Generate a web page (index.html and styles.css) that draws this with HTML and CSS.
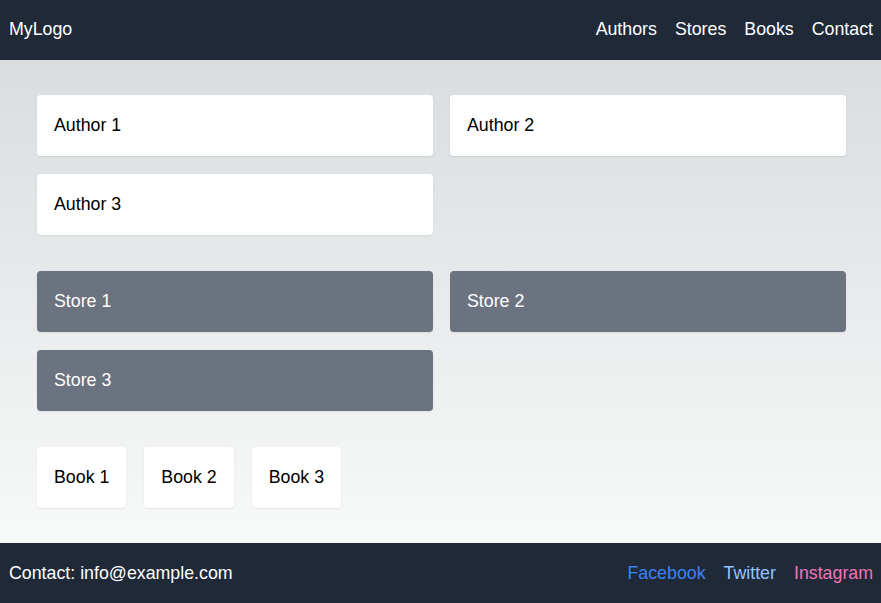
FILE: index.html
```html
<!DOCTYPE html>
<html lang="en">
<head>
<meta charset="utf-8">
<title>MyLogo</title>
<link rel="stylesheet" href="styles.css">
</head>
<body>
<header class="site-header">
  <div class="logo">MyLogo</div>
  <nav class="nav">
    <a href="#">Authors</a>
    <a href="#">Stores</a>
    <a href="#">Books</a>
    <a href="#">Contact</a>
  </nav>
</header>
<main class="main">
  <section class="grid2">
    <div class="card card-light">Author 1</div>
    <div class="card card-light">Author 2</div>
    <div class="card card-light">Author 3</div>
  </section>
  <section class="grid2">
    <div class="card card-dark">Store 1</div>
    <div class="card card-dark">Store 2</div>
    <div class="card card-dark">Store 3</div>
  </section>
  <section class="books">
    <div class="card card-light book">Book 1</div>
    <div class="card card-light book">Book 2</div>
    <div class="card card-light book">Book 3</div>
  </section>
</main>
<footer class="site-footer">
  <div class="contact">Contact: info@example.com</div>
  <div class="social">
    <a href="#" class="fb">Facebook</a>
    <a href="#" class="tw">Twitter</a>
    <a href="#" class="ig">Instagram</a>
  </div>
</footer>
</body>
</html>
```
FILE: styles.css
```css
* { box-sizing: border-box; }
html, body { margin: 0; padding: 0; height: 100%; }
body {
  font-family: "Liberation Sans", Arial, sans-serif;
  font-size: 17.8px;
  line-height: 28px;
  display: flex;
  flex-direction: column;
  min-height: 603px;
}
a { text-decoration: none; color: inherit; }
.site-header, .site-footer {
  background: #1f2937;
  color: #fff;
  height: 60px;
  flex: none;
  display: flex;
  align-items: center;
  justify-content: space-between;
  padding: 0 8px 2px 9px;
}
.nav, .social { display: flex; gap: 18px; }
.main {
  flex: 1;
  background: linear-gradient(#d9dddf, #f8f9f9);
  padding: 35px 35px 35px 37px;
  display: flex;
  flex-direction: column;
  gap: 36px;
}
.grid2 {
  display: grid;
  grid-template-columns: 1fr 1fr;
  gap: 18px 17px;
}
.card {
  height: 61px;
  padding: 0 17px 1px;
  display: flex;
  align-items: center;
  border-radius: 4px;
  box-shadow: 0 1px 2px rgba(0,0,0,0.08);
}
.card-light { background: #fff; color: #000; }
.card-dark { background: #6b7280; color: #fff; }
.books { display: flex; gap: 18px; }
.book { padding: 0 17px 1px 17px; }
.site-footer { padding-bottom: 0; }
.fb { color: #3b82f6; }
.tw { color: #93c5fd; }
.ig { color: #f472b6; }
```
